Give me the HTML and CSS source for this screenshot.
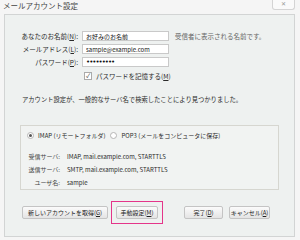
FILE: index.html
```html
<!DOCTYPE html>
<html lang="ja">
<head>
    <meta charset="UTF-8">
    <title>メールアカウント設定</title>
    <link rel="stylesheet" href="styles.css">
</head>
<body>

    <div class="window">
        <div class="titlebar">
            <span class="title">メールアカウント設定</span>
            <button class="close">✕</button>
        </div>

        <div class="panel">
            <div class="fields">
                <label for="name">あなたのお名前(<u>N</u>):</label>
                <input type="text" id="name" value="お好みのお名前">
                <span class="hint">受信者に表示される名前です。</span>

                <label for="email">メールアドレス(<u>L</u>):</label>
                <input type="text" id="email" value="sample@example.com">
                <span></span>

                <label for="pass">パスワード(<u>P</u>):</label>
                <input type="password" id="pass" class="secret" value="123456789">
                <span></span>

                <span></span>
                <label class="remember"><span class="check">✓</span>パスワードを記憶する(<u>M</u>)</label>
            </div>

            <p class="message">アカウント設定が、一般的なサーバ名で検索したことにより見つかりました。</p>

            <div class="group">
                <div class="radios">
                    <label><span class="radio on"></span>IMAP (リモートフォルダ)</label>
                    <label><span class="radio"></span>POP3 (メールをコンピュータに保存)</label>
                </div>
                <div class="servers">
                    <span class="key">受信サーバ:</span><span>IMAP, mail.example.com, STARTTLS</span>
                    <span class="key">送信サーバ:</span><span>SMTP, mail.example.com, STARTTLS</span>
                    <span class="key">ユーザ名:</span><span>sample</span>
                </div>
            </div>

            <div class="actions">
                <button class="btn wide">新しいアカウントを取得(<u>G</u>)</button>
                <span class="marker"><button class="btn manual">手動設定(<u>M</u>)</button></span>
                <button class="btn done">完了(<u>D</u>)</button>
                <button class="btn cancel">キャンセル(<u>A</u>)</button>
            </div>
        </div>
    </div>

</body>
</html>
```

FILE: styles.css
```css
body {
    margin: 0;
    font-family: "Noto Sans CJK JP", "Liberation Sans", sans-serif;
    color: #2a2a2a;
    background-color: #f5f5f5;
}

.window {
    width: 300px;
    height: 240px;
    box-sizing: border-box;
    padding: 0 5px 3px 4px;
    display: flex;
    flex-direction: column;
    white-space: nowrap;
}

.titlebar {
    height: 14px;
    display: flex;
    justify-content: space-between;
    align-items: flex-start;
}

.title {
    font-size: 7.5px;
    line-height: 12px;
    margin-left: -1px;
    color: #444;
}

.close {
    width: 23px;
    height: 10px;
    margin: 0;
    padding: 0;
    border: 1px solid #d4d4d4;
    border-top: none;
    border-radius: 0 0 3px 3px;
    background-color: #fafafa;
    color: #999;
    font-size: 6px;
    line-height: 9px;
}

.panel {
    flex: 1;
    border: 1px solid #d2d4d4;
    background-color: #eef1f0;
    display: flex;
    flex-direction: column;
}

.fields {
    display: grid;
    grid-template-columns: 73px 87px auto;
    column-gap: 4px;
    row-gap: 3px;
    margin-top: 16px;
    font-size: 6.5px;
}

.fields label {
    text-align: right;
    line-height: 10px;
}

.fields input {
    width: 87px;
    height: 10px;
    box-sizing: border-box;
    border: 1px solid #c9c9c9;
    background-color: #fff;
    font-family: inherit;
    font-size: 6px;
    padding: 0 3px;
    color: #111;
}

.fields .secret {
    font-family: "DejaVu Sans", sans-serif;
    font-size: 7px;
    letter-spacing: -1px;
}

.hint {
    margin-left: 2px;
    line-height: 10px;
    color: #666;
}

.fields .remember {
    grid-column: 2 / 4;
    text-align: left;
    display: flex;
    align-items: center;
    margin-top: 1px;
    margin-left: 2px;
}

.check {
    width: 6px;
    height: 6px;
    border: 1px solid #aaa;
    background-color: #fff;
    font-size: 6px;
    line-height: 6px;
    text-align: center;
    margin-right: 4px;
    color: #333;
}

.message {
    margin: 14px 0 0 17px;
    font-size: 6.3px;
    line-height: 10px;
}

.group {
    margin: 20px 0 0 15px;
    width: 259px;
    height: 65px;
    box-sizing: border-box;
    border: 1px solid #d6d6d0;
    background-color: #f1f3f2;
    padding: 5px 6px 0 6px;
    font-size: 6px;
}

.radios {
    display: flex;
    gap: 5px;
    line-height: 9px;
}

.radios label {
    display: flex;
    align-items: center;
}

.radio {
    width: 5px;
    height: 5px;
    border: 1px solid #b5b5b5;
    border-radius: 50%;
    background-color: #fff;
    margin-right: 4px;
    position: relative;
}

.radio.on::after {
    content: "";
    position: absolute;
    left: 1px;
    top: 1px;
    width: 3px;
    height: 3px;
    border-radius: 50%;
    background-color: #555;
}

.servers {
    display: grid;
    grid-template-columns: 33px auto;
    column-gap: 7px;
    row-gap: 4px;
    margin-top: 12px;
    line-height: 9px;
}

.key {
    text-align: right;
    color: #444;
}

.actions {
    margin-top: auto;
    margin-bottom: 12px;
    padding: 0 24px 0 17px;
    display: flex;
    align-items: center;
}

.btn {
    height: 13px;
    margin: 0;
    padding: 0;
    border: 1px solid #c4c4c4;
    border-radius: 2px;
    background: linear-gradient(#fbfbfb, #e4e4e4);
    font-family: inherit;
    font-size: 6px;
    line-height: 11px;
    color: #222;
    white-space: nowrap;
    text-align: center;
}

.wide {
    width: 86px;
}

.manual {
    width: 42px;
}

.marker {
    margin-left: 3px;
    padding: 4px 4px;
    border: 1.5px solid #e4358a;
    display: flex;
}

.done {
    width: 39px;
    margin-left: auto;
    margin-right: 6px;
}

.cancel {
    width: 41px;
}
```
